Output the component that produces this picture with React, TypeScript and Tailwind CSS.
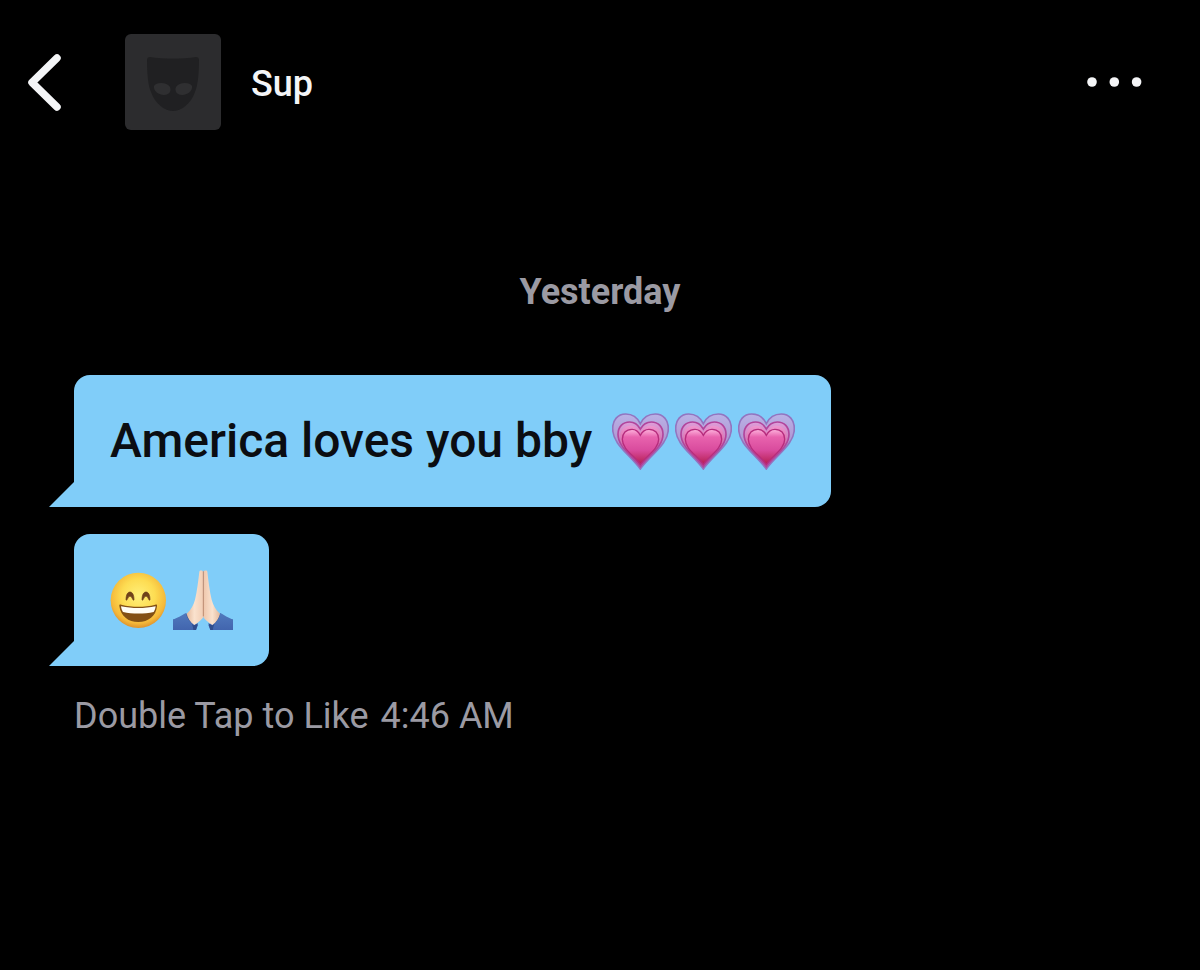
import type { ReactNode } from "react";

type Emoji = "heart" | "smile" | "pray";

type Message = {
  id: string;
  text?: string;
  emojis: Emoji[];
};

const messages: Message[] = [
  { id: "m1", text: "America loves you bby", emojis: ["heart", "heart", "heart"] },
  { id: "m2", emojis: ["smile", "pray"] }
];

function EmojiDefs() {
  return (
    <svg className="absolute h-0 w-0" aria-hidden="true">
      <defs>
        <linearGradient id="heartOuter" x1="0" y1="0" x2="0" y2="1">
          <stop offset="0" stopColor="#b9b2e6" />
          <stop offset="1" stopColor="#a879bd" />
        </linearGradient>
        <linearGradient id="heartMid" x1="0" y1="0" x2="0" y2="1">
          <stop offset="0" stopColor="#dd9fda" />
          <stop offset="1" stopColor="#b8468d" />
        </linearGradient>
        <linearGradient id="heartRing" x1="0" y1="0" x2="0" y2="1">
          <stop offset="0" stopColor="#ee96d0" />
          <stop offset="1" stopColor="#bd2f72" />
        </linearGradient>
        <linearGradient id="heartCore" x1="0" y1="0" x2="0" y2="1">
          <stop offset="0" stopColor="#fdb4dd" />
          <stop offset="0.22" stopColor="#e863ae" />
          <stop offset="0.6" stopColor="#d94b9d" />
          <stop offset="1" stopColor="#b51f51" />
        </linearGradient>
        <radialGradient id="face" cx="0.5" cy="0.42" r="0.6">
          <stop offset="0" stopColor="#fff07a" />
          <stop offset="0.5" stopColor="#fddc52" />
          <stop offset="0.82" stopColor="#f5b93a" />
          <stop offset="1" stopColor="#d98a2a" />
        </radialGradient>
        <linearGradient id="skinLeft" x1="0" y1="0" x2="1" y2="0">
          <stop offset="0" stopColor="#e3b99c" />
          <stop offset="0.45" stopColor="#fae2ce" />
          <stop offset="1" stopColor="#f1cdb4" />
        </linearGradient>
        <linearGradient id="skinRight" x1="1" y1="0" x2="0" y2="0">
          <stop offset="0" stopColor="#e3b99c" />
          <stop offset="0.45" stopColor="#fae2ce" />
          <stop offset="1" stopColor="#eec5aa" />
        </linearGradient>
        <linearGradient id="sleeve" x1="0" y1="0" x2="0" y2="1">
          <stop offset="0" stopColor="#5079bd" />
          <stop offset="1" stopColor="#4265ae" />
        </linearGradient>
      </defs>
    </svg>
  );
}

function Heart() {
  return (
    <svg viewBox="12 18 171 171" className="size-[57px]" role="img" aria-label="growing heart">
      <path
        d="M97 50C87 29 71 21 53 21C29 21 14 39 14 65C14 112 64 141 97 186C130 141 181 112 181 65C181 39 166 21 142 21C124 21 107 29 97 50Z"
        fill="url(#heartOuter)"
        stroke="#9275c0"
        strokeWidth="5"
      />
      <path
        d="M97 66C89 52 78 45 65 45C44 45 30 60 30 82C30 120 70 143 97 179C124 143 165 120 165 82C165 60 151 45 130 45C117 45 105 52 97 66Z"
        fill="url(#heartMid)"
        stroke="#b2459c"
        strokeWidth="5"
      />
      <path
        d="M97 77C90 63 79 56 68 56C49 56 37 69 37 89C37 121 73 143 97 175C121 143 158 121 158 89C158 69 146 56 127 56C116 56 104 63 97 77Z"
        fill="url(#heartRing)"
      />
      <path
        d="M97 85C91 73 82 67 72 67C54 67 43 79 43 97C43 126 76 144 97 172C118 144 152 126 152 97C152 79 141 67 123 67C113 67 103 73 97 85Z"
        fill="url(#heartCore)"
        stroke="#b62c7d"
        strokeWidth="4"
      />
    </svg>
  );
}

function Smile() {
  return (
    <svg viewBox="16 13 171 171" className="size-[57px]" role="img" aria-label="grinning face">
      <circle cx="101" cy="98" r="83" fill="url(#face)" />
      <path
        d="M64 97C64 81 69 73 76 73C83 73 88 81 88 97C84 101 83 86 76 86C69 86 68 101 64 97Z"
        fill="#70421a"
        stroke="#70421a"
        strokeWidth="2"
        strokeLinejoin="round"
      />
      <path
        d="M112 97C112 81 117 73 124 73C131 73 136 81 136 97C132 101 131 86 124 86C117 86 116 101 112 97Z"
        fill="#70421a"
        stroke="#70421a"
        strokeWidth="2"
        strokeLinejoin="round"
      />
      <path
        d="M44 115C43 111 46 110 50 111C83 119 119 119 152 111C156 110 158 111 157 116C154 146 131 163 101 163C71 163 48 146 44 115Z"
        fill="#835015"
      />
      <path
        d="M49 116C83 123 119 123 153 116C152 124 150 129 147 133C119 139 83 139 55 133C52 129 50 124 49 116Z"
        fill="#fffdf6"
      />
    </svg>
  );
}

function Pray() {
  return (
    <svg viewBox="18 18 180 180" className="size-[60px]" role="img" aria-label="folded hands">
      <path d="M18 166C29 164 45 153 57 147L93 183L87 198H18Z" fill="url(#sleeve)" />
      <path d="M198 166C187 164 172 153 160 147L124 183L130 198H198Z" fill="url(#sleeve)" />
      <path d="M57 147C60 162 70 176 80 184C86 184 89 180 93 177L87 198H79C79 182 66 168 57 147Z" fill="#304d8d" />
      <path d="M160 147C157 162 147 176 137 184C131 184 128 180 124 177L130 198H138C138 182 151 168 160 147Z" fill="#304d8d" />
      <path
        d="M97 23C97 18 107 18 108 23L110 156C107 166 94 175 82 183C70 174 62 163 59 149C72 138 80 122 84 107C90 82 94 50 97 23Z"
        fill="url(#skinLeft)"
      />
      <path
        d="M121 23C121 18 111 18 110 23L108 156C111 166 124 175 136 183C148 174 156 163 159 149C146 138 138 122 134 107C128 82 124 50 121 23Z"
        fill="url(#skinRight)"
      />
      <path d="M109 23V156" stroke="#bd8b70" strokeWidth="3" strokeLinecap="round" />
    </svg>
  );
}

const emojiIcons: Record<Emoji, () => ReactNode> = {
  heart: Heart,
  smile: Smile,
  pray: Pray
};

function Avatar() {
  return (
    <div className="flex size-24 shrink-0 items-center justify-center rounded-md bg-[#2c2c2e]">
      <svg viewBox="0 0 52 56" className="mt-1 h-14 w-[52px]" aria-hidden="true">
        <path
          d="M3 1C17 3 35 3 49 1C51 1 52 2 52 4C52 17 51 29 48 36C44 48 34 55 26 55C18 55 8 48 4 36C1 29 0 17 0 4C0 2 1 1 3 1Z"
          fill="#202022"
        />
        <path d="M7 30C9 26 20 26 23 31C25 36 21 39 17 39C12 39 6 35 7 30Z" fill="#2f2f31" />
        <path d="M45 30C43 26 32 26 29 31C27 36 31 39 35 39C40 39 46 35 45 30Z" fill="#2f2f31" />
      </svg>
    </div>
  );
}

function Bubble({ message }: { message: Message }) {
  return (
    <li className="relative flex min-h-[132px] items-center rounded-2xl rounded-bl-none bg-[#80cdf9] px-9 text-[#0b0d12]">
      <svg
        viewBox="0 0 26 26"
        className="absolute bottom-0 -left-[25px] size-[26px] text-[#80cdf9]"
        aria-hidden="true"
      >
        <path d="M26 0V26H0Z" fill="currentColor" />
      </svg>
      {message.text ? (
        <span className="mr-5 text-5xl font-medium">{message.text}</span>
      ) : null}
      <span className="flex shrink-0 items-center gap-1.5">
        {message.emojis.map((name, i) => {
          const Icon = emojiIcons[name];
          return <Icon key={i} />;
        })}
      </span>
    </li>
  );
}

export default function App() {
  return (
    <div className="min-h-screen bg-black font-['Roboto',sans-serif] text-[#9b9aa3]">
      <EmojiDefs />
      <header className="flex items-center pt-[34px] pr-14 pl-7 text-[#f4f5f7]">
        <button type="button" aria-label="Back" className="mr-16 shrink-0">
          <svg viewBox="0 0 33 57" className="h-[57px] w-[33px]" fill="none" aria-hidden="true">
            <path
              d="M29 4L4 28.5L29 53"
              stroke="currentColor"
              strokeWidth="7.5"
              strokeLinecap="round"
              strokeLinejoin="round"
            />
          </svg>
        </button>
        <Avatar />
        <h1 className="ml-[30px] flex-1 pt-1 text-4xl font-medium">Sup</h1>
        <button type="button" aria-label="More options" className="shrink-0">
          <svg viewBox="0 0 58 12" className="h-3 w-[58px]" fill="currentColor" aria-hidden="true">
            <circle cx="6" cy="6" r="4.8" />
            <circle cx="28.3" cy="6" r="4.8" />
            <circle cx="50.6" cy="6" r="4.8" />
          </svg>
        </button>
      </header>

      <main className="px-[74px] pt-[142px]">
        <h2 className="text-center text-4xl font-bold">Yesterday</h2>
        <ul className="mt-[63px] flex flex-col items-start gap-[27px]">
          {messages.map((message) => (
            <Bubble key={message.id} message={message} />
          ))}
        </ul>
        <p className="mt-[30px] flex gap-3 text-4xl">
          <span>Double Tap to Like</span>
          <time>4:46 AM</time>
        </p>
      </main>
    </div>
  );
}
